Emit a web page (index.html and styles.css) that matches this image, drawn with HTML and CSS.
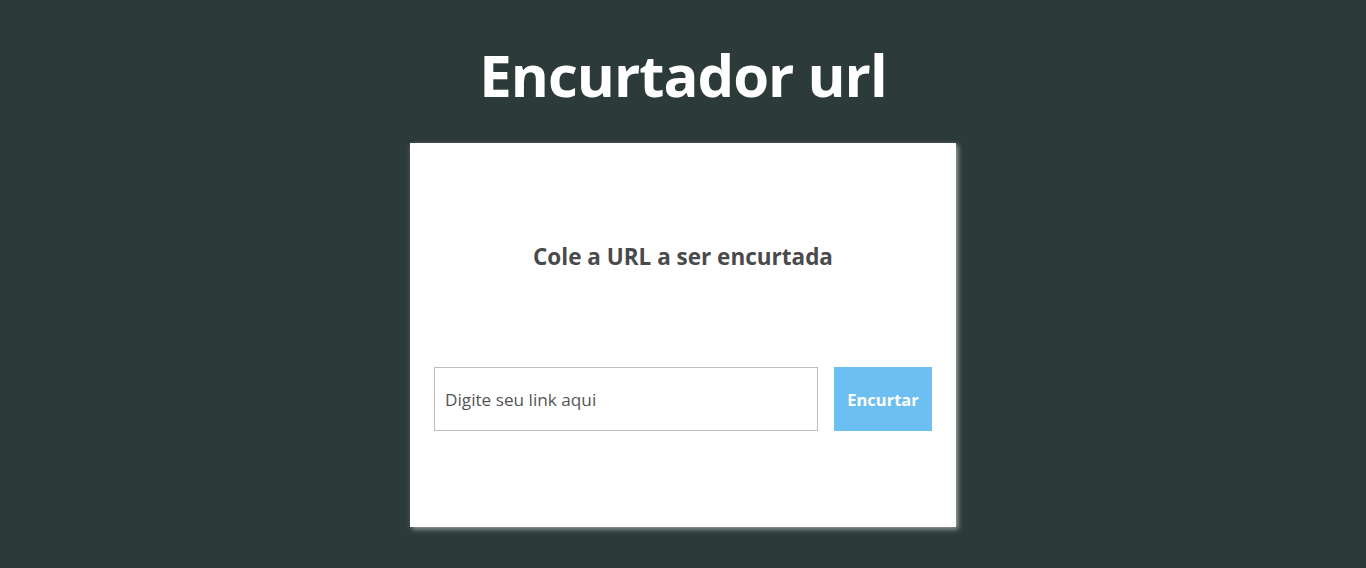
FILE: index.html
```html
<!DOCTYPE html>
<html lang="pt-BR">
<head>
<meta charset="utf-8">
<title>Encurtador url</title>
<link rel="stylesheet" href="styles.css">
</head>
<body>
  <h1 class="title">Encurtador url</h1>
  <main class="card">
    <h2 class="card-title">Cole a URL a ser encurtada</h2>
    <form class="form">
      <input class="input" type="text" placeholder="Digite seu link aqui">
      <button class="button" type="button">Encurtar</button>
    </form>
  </main>
</body>
</html>
```
FILE: styles.css
```css
* { box-sizing: border-box; }
html, body { margin: 0; padding: 0; }
body {
  background: #2d3a3a;
  font-family: "Open Sans", "Noto Sans", sans-serif;
  display: flex;
  flex-direction: column;
  align-items: center;
  min-height: 568px;
}
.title {
  margin: 0;
  padding-top: 36px;
  height: 143px;
  color: #ffffff;
  font-size: 58px;
  font-weight: 700;
  line-height: 78px;
  letter-spacing: -1px;
}
.card {
  width: 546px;
  height: 384px;
  background: #ffffff;
  box-shadow: 2px 2px 5px rgba(255,255,255,0.55);
  padding: 0 24px;
  display: flex;
  flex-direction: column;
}
.card-title {
  margin: 0;
  padding-top: 98px;
  height: 224px;
  text-align: center;
  color: #4a4a4a;
  font-size: 22.5px;
  font-weight: 700;
  line-height: 32px;
}
.form {
  display: flex;
  gap: 16px;
  margin: 0;
}
.input {
  flex: 1;
  height: 64px;
  border: 1px solid #bdbdbd;
  padding: 0 10px;
  font-family: inherit;
  font-size: 17.2px;
  color: #333;
  outline: none;
}
.input::placeholder { color: #555; }
.button {
  width: 98px;
  height: 64px;
  border: none;
  background: #6ebff1;
  color: #ffffff;
  font-family: inherit;
  font-weight: 700;
  font-size: 16.5px;
  padding: 0;
}
```
